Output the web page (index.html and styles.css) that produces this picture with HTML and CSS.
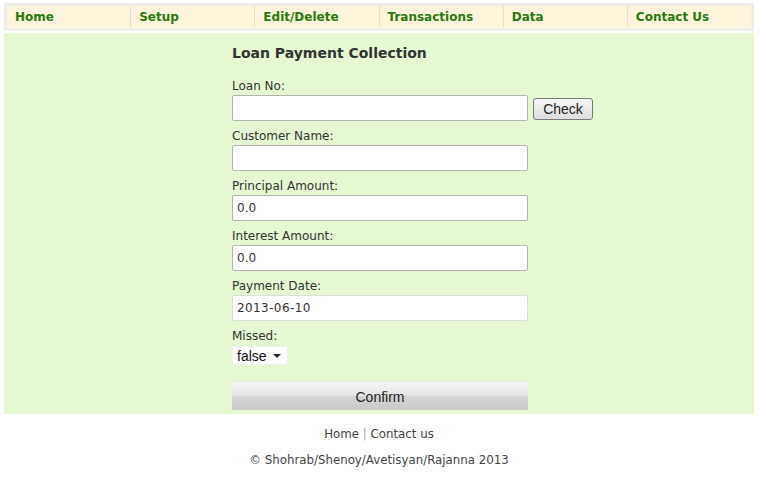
FILE: index.html
```html
<!DOCTYPE html>
<html lang="en">

<head>
    <meta charset="UTF-8">
    <title>Loan Payment Collection</title>
    <link rel="stylesheet" href="styles.css">
</head>

<body>
    <div class="page">
        <div class="nav-bar">
            <ul>
                <li><a href="#">Home</a></li>
                <li><a href="#">Setup</a></li>
                <li><a href="#">Edit/Delete</a></li>
                <li><a href="#">Transactions</a></li>
                <li><a href="#">Data</a></li>
                <li><a href="#">Contact Us</a></li>
            </ul>
        </div>

        <div class="content">
            <form class="loan-form">
                <h2>Loan Payment Collection</h2>

                <label>Loan No:</label>
                <div class="row">
                    <input type="text" class="field">
                    <button type="button" class="check-btn">Check</button>
                </div>

                <label>Customer Name:</label>
                <input type="text" class="field">

                <label>Principal Amount:</label>
                <input type="text" class="field" value="0.0">

                <label>Interest Amount:</label>
                <input type="text" class="field" value="0.0">

                <label>Payment Date:</label>
                <input type="text" class="field date" value="2013-06-10">

                <label>Missed:</label>
                <div class="select-box">
                    <span>false</span>
                    <span class="arrow"></span>
                </div>

                <button type="button" class="confirm-btn">Confirm</button>
            </form>
        </div>

        <div class="footer">
            <p><a href="#">Home</a> <span class="sep">|</span> <a href="#">Contact us</a></p>
            <p>&copy; Shohrab/Shenoy/Avetisyan/Rajanna 2013</p>
        </div>
    </div>
</body>

</html>
```

FILE: styles.css
```css
body {
    font-family: "DejaVu Sans", Verdana, sans-serif;
    margin: 0;
    padding: 0;
    background-color: #fff;
    color: #333;
}

.page {
    padding: 3px 8px 0 4px;
}

.nav-bar {
    background-color: #efefea;
    padding: 3px 3px 3px 3px;
}

.nav-bar ul {
    list-style: none;
    margin: 0;
    padding: 0;
    display: flex;
    background-color: #fdf4dc;
}

.nav-bar li {
    flex: 1;
    border-right: 1px solid #eadfbf;
    height: 22px;
    line-height: 20px;
    padding-left: 8px;
}

.nav-bar li:last-child {
    border-right: none;
}

.nav-bar a {
    color: #2b7a0b;
    font-weight: bold;
    font-size: 12px;
    text-decoration: none;
}

.content {
    background-color: #e5f8d3;
    margin-top: 2px;
    padding: 8px 0 4px 228px;
}

.loan-form {
    display: flex;
    flex-direction: column;
    align-items: flex-start;
}

.loan-form h2 {
    font-size: 14px;
    margin: 4px 0 16px 0;
    color: #333;
}

.loan-form label {
    font-size: 12px;
    height: 18px;
    line-height: 18px;
    color: #333;
}

.row {
    display: flex;
    align-items: center;
}

.field {
    box-sizing: border-box;
    width: 296px;
    height: 26px;
    margin: 0 0 6px 0;
    padding: 0 4px;
    border: 1px solid #b4b4b4;
    border-radius: 2px;
    background-color: #fff;
    font-family: "DejaVu Sans", Verdana, sans-serif;
    font-size: 12px;
    color: #333;
}

.field.date {
    border-color: #dcdcdc;
    letter-spacing: 0.4px;
}

.check-btn {
    margin: 0 0 4px 5px;
    width: 60px;
    height: 22px;
    padding: 0;
    border: 1px solid #7a7a7a;
    border-radius: 3px;
    background: linear-gradient(#f6f6f6, #dedede);
    font-family: "Liberation Sans", Arial, sans-serif;
    font-size: 14px;
    color: #222;
}

.select-box {
    box-sizing: border-box;
    width: 56px;
    height: 19px;
    margin-top: 1px;
    padding: 0 4px;
    background-color: #fff;
    border: 1px solid #f0f0f0;
    display: flex;
    align-items: center;
    justify-content: space-between;
    font-family: "Liberation Sans", Arial, sans-serif;
    font-size: 14px;
    color: #111;
}

.select-box .arrow {
    width: 0;
    height: 0;
    border-left: 4px solid transparent;
    border-right: 4px solid transparent;
    border-top: 4px solid #222;
    margin-right: 2px;
}

.confirm-btn {
    margin-top: 16px;
    width: 296px;
    height: 29px;
    border: none;
    border-top: 1px solid #e6e6e6;
    background: linear-gradient(#f4f4f4 0%, #e6e6e6 48%, #d4d4d4 52%, #cacaca 100%);
    font-family: "Liberation Sans", Arial, sans-serif;
    font-size: 14px;
    color: #222;
    padding: 2px 0 0 0;
}

.footer {
    text-align: center;
    font-size: 11.8px;
    color: #444;
    padding-top: 12px;
}

.footer p {
    margin: 0 0 9px 0;
    line-height: 17px;
}

.footer a {
    color: #444;
    text-decoration: none;
}

.footer .sep {
    color: #aaa;
}
```
